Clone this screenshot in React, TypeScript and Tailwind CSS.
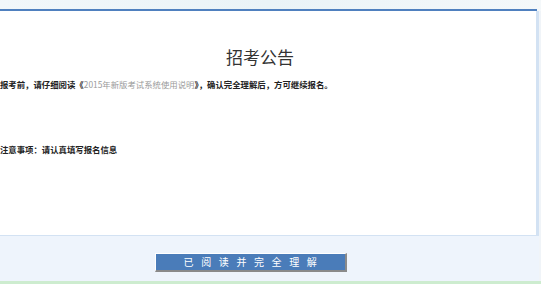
const cjk = { fontFamily: '"Noto Sans CJK SC", "Noto Sans", sans-serif' };

export default function App() {
  return (
    <div className="w-[541px] h-[284px] overflow-hidden flex flex-col bg-[#eef4fc]" style={cjk}>
      <div className="h-[9px] bg-gradient-to-r from-[#f2f7fa] via-[#eaf3f7] to-[#f4f8fa]" />
      <div className="flex">
        <div className="w-[537px] h-[2px] bg-[#4f80bf]" />
        <div className="flex-1 bg-[#f4f8fa]" />
      </div>
      <div className="flex">
        <div className="w-[539px] h-[225px] bg-white border-r-[3px] border-b border-[#d3e2f3] flex flex-col">
          <div className="pt-[35px] pr-[16px] text-center text-[17px] leading-[22px] text-[#333]">招考公告</div>
          <p className="mt-[11px] text-[8.4px] leading-[10px] font-bold text-[#222] whitespace-nowrap">
            报考前，请仔细阅读《<span className="font-normal text-[#9a9a9a]">2015年新版考试系统使用说明</span>》，确认完全理解后，方可继续报名。
          </p>
          <p className="mt-[55px] text-[8.4px] leading-[10px] font-bold text-[#222] whitespace-nowrap">
            注意事项：请认真填写报名信息
          </p>
        </div>
        <div className="flex-1 bg-[#f0f4f8]" />
      </div>
      <div className="flex-1 flex">
        <div className="w-[539px] flex pt-[17px] pl-[155px]">
          <button className="w-[192px] h-[19px] bg-[#4a7cb9] border-t border-l border-white border-b-2 border-r-2 border-b-[#8a8a8a] border-r-[#8a8a8a] text-white text-[10px] leading-[16px] tracking-[7.6px] pl-[7px]">
            已阅读并完全理解
          </button>
        </div>
        <div className="flex-1 bg-[#f0f4f8]" />
      </div>
      <div className="h-[3px] bg-[#cdeccf]" />
    </div>
  );
}
